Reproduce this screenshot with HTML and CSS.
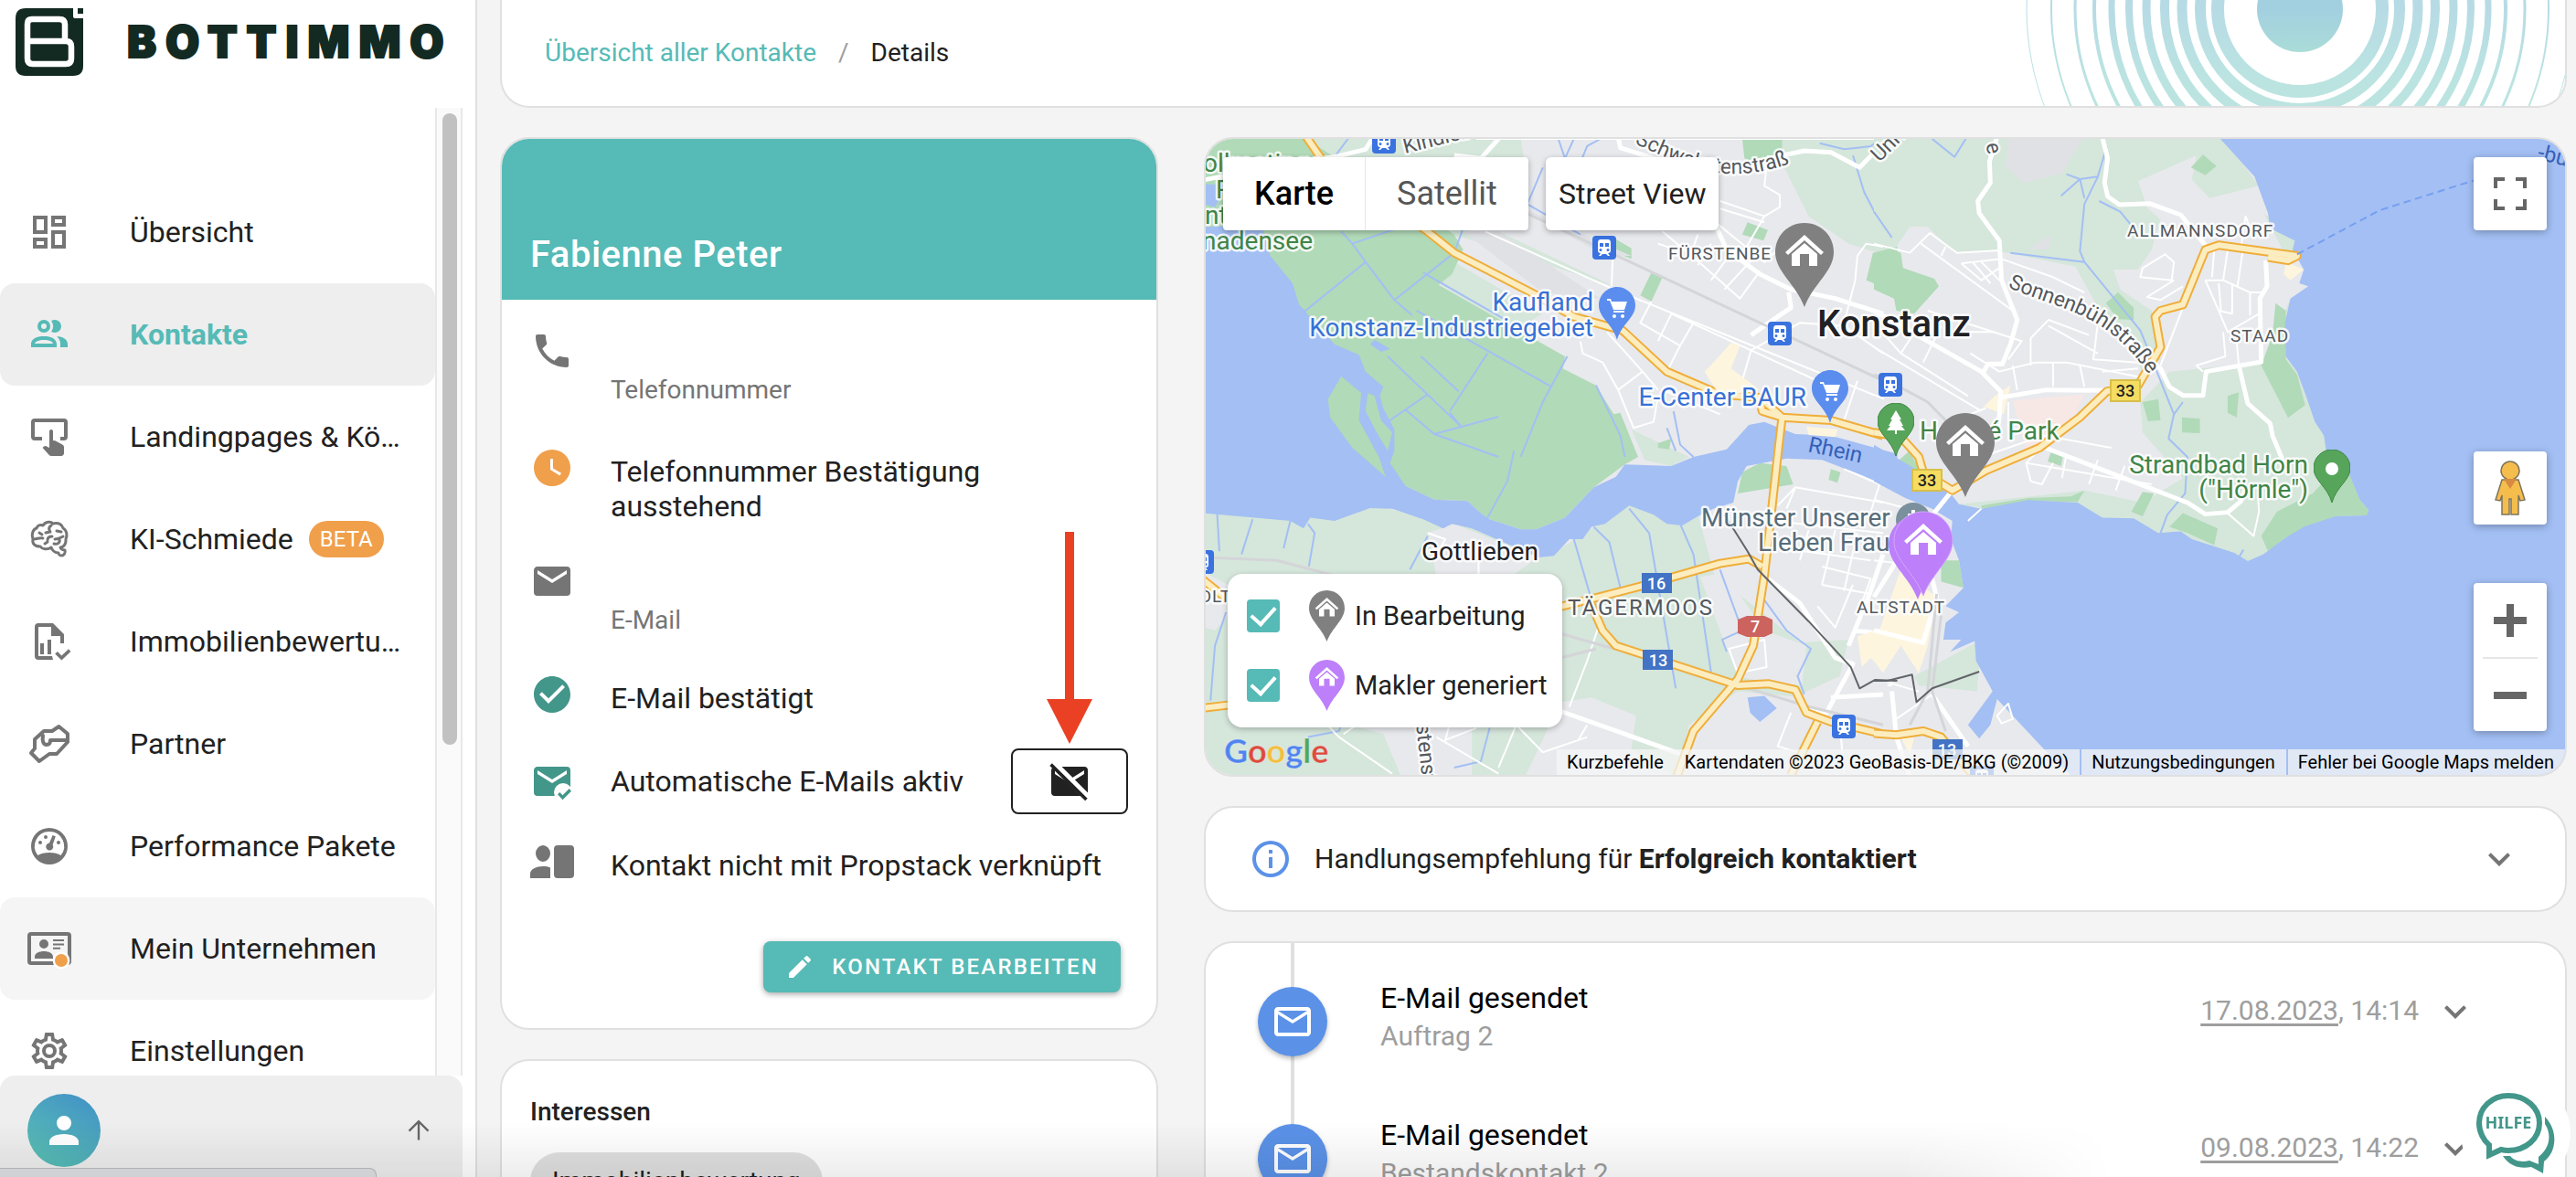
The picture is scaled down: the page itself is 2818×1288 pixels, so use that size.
FILE: index.html
```html
<!DOCTYPE html>
<html lang="de">
<head>
<meta charset="utf-8">
<meta name="viewport" content="width=device-width, initial-scale=1">
<title>Kontakt – Details</title>
<link rel="stylesheet" href="styles.css">
</head>
<body>
<div class="app">

<aside class="sidebar">
  <a class="brand" href="#">
    <svg class="brand-mark" viewBox="0 0 74 74" aria-hidden="true">
      <path fill="#132a22" d="M11 0H63V9Q63 11 65 11H74V63Q74 74 63 74H11Q0 74 0 63V11Q0 0 11 0ZM68 0H74V6H68Z"/>
      <path fill="none" stroke="#fff" stroke-width="6.500" d="M13 36V17Q13 12 18 12H48Q54 12 54 18V36M13 36H55Q61 36 61 42V55Q61 61 55 61H19Q13 61 13 55V36"/>
    </svg>
    <span class="brand-name">BOTTIMMO</span>
  </a>

  <div class="nav-scroll">
    <nav class="nav" aria-label="Hauptmenü">
      <a class="nav-item" href="#"><svg class="icon" viewBox="0 0 24 24"><path d="M19 5v2h-4V5h4M9 5v6H5V5h4m10 8v6h-4v-6h4M9 17v2H5v-2h4M21 3h-8v6h8V3M11 3H3v10h8V3m10 8h-8v10h8V11m-10 4H3v6h8v-6z"/></svg><span class="nav-text">Übersicht</span></a>
      <a class="nav-item is-active" href="#" aria-current="page"><svg class="icon" viewBox="0 0 24 24"><path d="M13.070 10.410a5 5 0 0 0 0-5.820A3.390 3.390 0 0 1 15 4a3.500 3.500 0 0 1 0 7 3.390 3.390 0 0 1-1.930-.590M5.500 7.500A3.500 3.500 0 1 1 9 11 3.500 3.500 0 0 1 5.500 7.500m2 0A1.500 1.500 0 1 0 9 6a1.500 1.500 0 0 0-1.500 1.500M16 17v2H2v-2s0-4 7-4 7 4 7 4m-2 0c-.140-.780-1.330-2-5-2s-4.930 1.310-5 2m11.950-4A5.320 5.320 0 0 1 18 17v2h4v-2s0-3.630-6.060-4z"/></svg><span class="nav-text">Kontakte</span></a>
      <a class="nav-item" href="#"><svg class="icon" viewBox="0 0 24 24"><path d="M4 2h16a2 2 0 0 1 2 2v8a2 2 0 0 1-2 2h-2v-2h2V4H4v8h4v2H4a2 2 0 0 1-2-2V4a2 2 0 0 1 2-2zM13 8a1 1 0 0 1 1 1v5l1.200.100 3.900 2.100c.600.300.900.800.900 1.400V21c0 .800-.700 1.500-1.500 1.500H13c-.400 0-.700-.100-1-.400L8.300 18l.700-.700c.200-.200.500-.300.800-.300H10l2 1V9a1 1 0 0 1 1-1z"/></svg><span class="nav-text">Landingpages &amp; Köder</span></a>
      <a class="nav-item" href="#"><svg class="icon" viewBox="0 0 24 24"><path class="line" d="M8.500 4.500C10 2 13 2.300 14 3.500c3-.800 5 .500 5.500 2.500 2 1 2.500 4 1.500 6 .300 3-1.500 4.500-3 4.500.500 1 1.500 1.500 2.500 1.500.500 1.500-.500 3-2 3-1 0-1.500-1-1.500-1.500-2 0-3.500-1.500-4-3-2 1.500-5 1-6-.500-3 0-4.500-1.500-4-4C2 9.500 3 6.500 5 6c.500-1.500 2-2 3.500-1.500M13 4.500c-1.500 1-1.500 2-.500 3.500L10 8.500M6.500 8.500 8 9.500M3.500 12c2 0 3-1 5-.500M16 7.500l2.500.500M11 12.500c0-1.500 1-2 2.500-2M15 12c2 0 2.500-.500 4.500-1.500M17.500 12c.500 2-1 3-3 2.500M9.500 14.500l1.500-1"/></svg><span class="nav-text">KI-Schmiede</span><span class="badge">BETA</span></a>
      <a class="nav-item" href="#"><svg class="icon" viewBox="0 0 24 24"><path d="M6 2h8l6 6v5h-2V9h-5V4H6v16h7.500l.500 2H6a2 2 0 0 1-2-2V4a2 2 0 0 1 2-2zm1 11h2v6H7zm4-2h2v8h-2zm5.500 6.500 2.200 2.200 3.800-3.600 1.200 1.400-5 4.800-3.600-3.500z"/></svg><span class="nav-text">Immobilienbewertung</span></a>
      <a class="nav-item" href="#"><svg class="icon" viewBox="0 0 24 24"><path class="line bold" d="M17.200 2.500 22 6.500v4.500l-6 6.500H12l-5.500 4L2 17l2-2.500V9.500L9 5h4.500l3.700-2.500zM8.500 7.500c-.500 2.500 0 5 2 5s2-1.500 2-2.500h8.500"/></svg><span class="nav-text">Partner</span></a>
      <a class="nav-item" href="#"><svg class="icon" viewBox="0 0 24 24"><path fill-rule="evenodd" d="M12 2a10 10 0 1 1 0 20 10 10 0 0 1 0-20m0 2a8 8 0 0 0-6.300 13c1.500-1 3.700-1.500 6.300-1.500s4.800.500 6.300 1.500A8 8 0 0 0 12 4m1.800 2 1.600.600-1.600 4.600a2 2 0 1 1-1.800-.900zM10 6a1 1 0 1 1 0 2 1 1 0 0 1 0-2M7 9a1 1 0 1 1 0 2 1 1 0 0 1 0-2m10 0a1 1 0 1 1 0 2 1 1 0 0 1 0-2"/></svg><span class="nav-text">Performance Pakete</span></a>
      <a class="nav-item is-hover" href="#"><svg class="icon" viewBox="0 0 24 24"><path d="M2 3h20a2 2 0 0 1 2 2v14a2 2 0 0 1-2 2H2a2 2 0 0 1-2-2V5a2 2 0 0 1 2-2m0 2v14h20V5zm12 2h6v1h-6zm0 2.200h6v1h-6zm0 2.200h4v1h-4zM9 7a2.500 2.500 0 1 1 0 5 2.500 2.500 0 0 1 0-5m0 6.500c2.500 0 5 1 5 3V17.500H4v-1c0-2 2.500-3 5-3z"/><circle cx="18.500" cy="18.500" r="4.700" fill="#fff"/><circle cx="18.500" cy="18.500" r="3.500" fill="#f09f4b"/></svg><span class="nav-text">Mein Unternehmen</span></a>
      <a class="nav-item" href="#"><svg class="icon" viewBox="0 0 24 24"><path d="M12 8a4 4 0 1 1 0 8 4 4 0 0 1 0-8m0 2a2 2 0 1 0 0 4 2 2 0 0 0 0-4m-2 12c-.250 0-.460-.180-.500-.420l-.370-2.650c-.630-.250-1.170-.590-1.690-.990l-2.490 1.010c-.220.080-.490 0-.610-.220l-2-3.460c-.130-.220-.070-.490.120-.640l2.110-1.660L4.500 12l.070-1-2.110-1.630c-.190-.150-.250-.420-.120-.640l2-3.460c.120-.220.390-.310.610-.220l2.490 1c.520-.390 1.060-.730 1.690-.980l.370-2.650c.040-.240.250-.420.500-.420h4c.250 0 .460.180.500.420l.370 2.650c.630.250 1.170.590 1.690.980l2.490-1c.220-.090.490 0 .610.220l2 3.460c.130.220.070.490-.120.640L19.430 11l.070 1-.070 1 2.110 1.630c.190.150.250.420.120.640l-2 3.460c-.120.220-.390.310-.610.220l-2.490-1c-.520.390-1.060.730-1.690.980l-.370 2.650c-.040.240-.250.420-.500.420h-4m1.250-18-.370 2.610c-1.200.250-2.260.890-3.030 1.780L5.440 7.350l-.750 1.300L6.800 10.200c-.400 1.170-.400 2.430 0 3.600l-2.120 1.560.750 1.300 2.430-1.040c.770.880 1.820 1.520 3.010 1.760l.370 2.620h1.520l.370-2.610c1.190-.250 2.240-.890 3.010-1.770l2.430 1.040.750-1.300-2.120-1.550c.400-1.170.400-2.440 0-3.610l2.110-1.550-.750-1.300-2.410 1.040c-.780-.890-1.840-1.530-3.040-1.770L12.750 4h-1.500z"/></svg><span class="nav-text">Einstellungen</span></a>
    </nav>
    <div class="scrollbar" aria-hidden="true"><div class="thumb"></div></div>
  </div>

  <div class="account">
    <button class="avatar" type="button" aria-label="Profil"><svg class="icon" viewBox="0 0 24 24"><path d="M12 4a4 4 0 0 1 4 4 4 4 0 0 1-4 4 4 4 0 0 1-4-4 4 4 0 0 1 4-4m0 10c4.420 0 8 1.790 8 4v2H4v-2c0-2.210 3.580-4 8-4z"/></svg></button>
    <button class="plain" type="button" aria-label="Profilmenü öffnen"><svg class="icon-up" viewBox="0 0 24 24"><path d="M12 21V4M3 12.500 12 3.500l9 9"/></svg></button>
  </div>
  <div class="status" aria-hidden="true"></div>
</aside>

<main class="main">
  <header class="card topbar">
    <nav class="crumbs" aria-label="Brotkrumen"><a href="#">Übersicht aller Kontakte</a><span class="slash">/</span><span>Details</span></nav>
    <svg class="rings" viewBox="0 0 592 116" aria-hidden="true">
      <defs><linearGradient id="ring" gradientUnits="userSpaceOnUse" x1="0" y1="10" x2="0" y2="90"><stop offset="0" stop-color="#b7dbe5"/><stop offset="1" stop-color="#bbe4e1"/></linearGradient>
      <linearGradient id="disc" x1="0" y1="0.500" x2="0" y2="1"><stop offset="0" stop-color="#a3d0e0"/><stop offset="1" stop-color="#aadcd8"/></linearGradient></defs>
      <circle cx="302" cy="10" r="47" fill="url(#disc)"/>
      <g fill="none" stroke="url(#ring)">
        <circle cx="302" cy="10" r="90" stroke-width="14"/><circle cx="302" cy="10" r="109" stroke-width="12"/><circle cx="302" cy="10" r="129" stroke-width="11"/><circle cx="302" cy="10" r="148" stroke-width="10"/><circle cx="302" cy="10" r="168" stroke-width="9"/><circle cx="302" cy="10" r="187" stroke-width="8"/><circle cx="302" cy="10" r="206" stroke-width="7"/><circle cx="302" cy="10" r="225" stroke-width="4"/><circle cx="302" cy="10" r="246" stroke-width="3"/><circle cx="302" cy="10" r="272" stroke-width="2"/><circle cx="302" cy="10" r="299" stroke-width="1"/>
      </g>
    </svg>
  </header>

  <div class="columns">
    <div class="column">
      <section class="card contact">
        <h1 class="contact-name">Fabienne Peter</h1>
        <ul class="facts">
          <li class="fact tall"><svg class="icon" viewBox="0 0 24 24"><path d="M6.620 10.790c1.440 2.830 3.760 5.140 6.590 6.590l2.200-2.200c.270-.270.670-.360 1.020-.240 1.120.370 2.330.570 3.570.570.550 0 1 .450 1 1V20c0 .550-.450 1-1 1C10.610 21 3 13.390 3 4c0-.550.450-1 1-1h3.500c.550 0 1 .450 1 1 0 1.250.200 2.450.570 3.570.110.350.030.740-.250 1.020l-2.200 2.200z"/></svg><span class="hint">Telefonnummer</span></li>
          <li class="fact wide"><svg class="icon orange" viewBox="0 0 24 24"><path d="M12 2A10 10 0 0 0 2 12a10 10 0 0 0 10 10 10 10 0 0 0 10-10A10 10 0 0 0 12 2m4.200 14.200L11 13V7h1.500v5.200l4.500 2.700-.800 1.300z"/></svg><span class="value">Telefonnummer Bestätigung ausstehend</span></li>
          <li class="fact wide"><svg class="icon" viewBox="0 0 24 24"><path d="M20 8l-8 5-8-5V6l8 5 8-5m0-2H4c-1.110 0-2 .890-2 2v12a2 2 0 0 0 2 2h16a2 2 0 0 0 2-2V6a2 2 0 0 0-2-2z"/></svg><span class="hint">E-Mail</span></li>
          <li class="fact short"><svg class="icon green" viewBox="0 0 24 24"><path d="M12 2C6.500 2 2 6.500 2 12s4.500 10 10 10 10-4.500 10-10S17.500 2 12 2m-2 15-5-5 1.410-1.410L10 14.170l7.590-7.590L19 8l-9 9z"/></svg><span class="value">E-Mail bestätigt</span></li>
          <li class="fact action"><svg class="icon green" viewBox="0 0 24 24"><path d="M20 8l-8 5-8-5V6l8 5 8-5m0-2H4c-1.110 0-2 .890-2 2v12a2 2 0 0 0 2 2h16a2 2 0 0 0 2-2V6a2 2 0 0 0-2-2z"/><circle cx="18" cy="18" r="5" fill="#fff"/><path d="M17.750 22.160l-2.750-3 1.160-1.160 1.590 1.590 3.590-3.590 1.160 1.410-4.750 4.750"/></svg><span class="value">Automatische E-Mails aktiv</span>
            <button class="outline-button" type="button" aria-label="Automatische E-Mails deaktivieren"><svg class="icon" viewBox="0 0 24 24"><path d="M20 8l-8 5-8-5V6l8 5 8-5m0-2H4c-1.110 0-2 .890-2 2v12a2 2 0 0 0 2 2h16a2 2 0 0 0 2-2V6a2 2 0 0 0-2-2z"/><path d="M2.500 1.500 22.500 21.500" stroke="#fff" stroke-width="4"/><path d="M1.800 2.800 21.200 22" stroke="#212121" stroke-width="1.800"/></svg></button>
            <svg class="pointer" viewBox="0 0 50 232" aria-hidden="true"><path fill="#ea4124" d="M20 0H30V183H50L25 232 0 183H20Z"/></svg>
          </li>
          <li class="fact"><svg class="icon" viewBox="0 0 24 24"><path d="M7 3a4 4.500 0 1 1 0 9 4 4.500 0 0 1 0-9m4 18H0v-2.500c0-2.500 3.500-4 7-4 1.500 0 2.900.200 4 .700zM15 3h7a2 2 0 0 1 2 2v14a2 2 0 0 1-2 2h-7a2 2 0 0 1-2-2V5a2 2 0 0 1 2-2z"/></svg><span class="value">Kontakt nicht mit Propstack verknüpft</span></li>
        </ul>
        <div class="contact-actions"><button class="primary-button" type="button"><svg viewBox="0 0 24 24"><path d="M20.710 7.040c.390-.390.390-1.040 0-1.410l-2.340-2.340c-.370-.390-1.020-.390-1.410 0l-1.840 1.830 3.750 3.750M3 17.250V21h3.750L17.810 9.930l-3.750-3.750L3 17.250z"/></svg>Kontakt bearbeiten</button></div>
      </section>
      <section class="card interests">
        <h2>Interessen</h2>
        <span class="chip">Immobilienbewertung</span>
      </section>
    </div>

    <div class="column">
      <section class="card map" aria-label="Karte">
        <svg class="map-canvas" viewBox="1319 152 1487 696" preserveAspectRatio="xMidYMid slice">
          <defs>
            <symbol id="pin" viewBox="0 0 64 92" overflow="visible"><path d="M32 0C50 0 64 14 64 32 64 53 42 66 32 92 22 66 0 53 0 32 0 14 14 0 32 0Z"/><path fill="#fff" stroke="none" d="M32 13 11 32l3 3 18-16 18 16 3-3zM32 22 18 34v13h9V34h10v13h9V34z"/></symbol>
            <symbol id="spot" viewBox="0 0 40 58"><path d="M20 0C31 0 40 9 40 20 40 34 25 40 20 58 15 40 0 34 0 20 0 9 9 0 20 0Z"/></symbol>
            <symbol id="cart" viewBox="0 0 24 24"><path d="M1 2h4l1 3h17l-3 9H8L4 4H1zM8 15h12v2H8z"/><circle cx="9" cy="21" r="2"/><circle cx="18" cy="21" r="2"/></symbol>
            <symbol id="train" viewBox="0 0 26 26"><rect width="26" height="26" rx="4" fill="#3a73e0"/><path fill="#fff" fill-rule="evenodd" d="M9 4h8q3 0 3 4v8q0 3-3 3l2 3h-2l-2-2h-4l-2 2H7l2-3q-3 0-3-3V8q0-4 3-4zM8 8v4h4V8zm6 0v4h4V8zM9 14a1 1 0 1 0 0 3 1 1 0 0 0 0-3m8 0a1 1 0 1 0 0 3 1 1 0 0 0 0-3"/></symbol>
          </defs>
          <rect x="1300" y="140" width="1520" height="720" fill="#e8e9ed"/>

          <!-- western half -->
          <g class="terrain" transform="translate(1300 140) scale(.4847 .3333)">
            <path class="meadow" d="M260 30H750L760 130 700 280 610 360 400 180ZM1310 30 1400 290 1490 380 1600 430V30ZM570 515 600 440 800 610 740 660ZM600 350 700 340 960 520ZM0 1250 420 1240 640 1310 820 1400 1000 1230 1150 1270 1190 1480 1250 1540 1380 1690 1490 1680 1470 1800 1380 1860 1420 2140H0ZM1030 1090 1090 1110 1130 1080 1000 990Z"/>
            <path class="urban" d="M1155 1475 1210 1460 1300 1650 1395 1700 1385 1830 1300 1820 1240 1800 1210 1690ZM840 1885 910 1870 1010 1930 1000 2040 1100 2130H760ZM340 1950H640L640 2130H480L440 1990ZM1130 1960 1240 1850 1600 1900V2140H1100ZM540 1330 600 1300 790 1410 730 1470H560ZM37 1460 90 1500V1600L60 1650 37 1640Z"/>
            <path class="park" d="M37 30H260L345 110 600 350 620 400 595 480 565 515 740 660 850 750 845 790 920 845 960 940 975 935 1015 1080 985 1105 915 1180 850 1280 785 1318 750 1318 680 1285 660 1265 630 1225 555 1220 490 1175 300 1060 37 900ZM1045 475 1070 490 1045 570 1020 550ZM1262 310 1308 335 1298 370 1250 350ZM965 365 1000 395V430L965 410ZM1190 36H1340L1340 100 1290 120 1255 100 1250 36ZM1545 410 1600 390V540L1530 500ZM1250 1130 1290 1100 1350 1110 1365 1170 1240 1200ZM1450 1120 1472 1130 1465 1165 1445 1155ZM1060 1035 1090 1020 1085 1055 1060 1050Z"/>
            <path class="runway" d="M620 340 700 340 930 560 800 540ZM720 240 1000 420 940 420Z"/>
            <path class="water" d="M37 325 165 320 185 420 235 510 250 580 330 710 385 745 400 800 440 850 432 880 440 920 465 990 465 1060 455 1100 490 1175 555 1220 630 1225 660 1265 680 1285 750 1318 785 1318 850 1280 915 1180 965 1145 985 1105 1090 1110 1140 1080 1215 1055 1265 975 1300 965 1370 1005 1450 1010 1600 1070 1600 1190 1520 1140 1430 1090 1350 1085 1260 1110 1240 1160 1230 1230 1185 1250 1150 1275 1115 1305 1080 1300 1050 1270 995 1240 940 1300 910 1310 890 1350 860 1350 825 1405 790 1410 640 1315 595 1300 575 1315 530 1285 460 1250 410 1248 330 1290 275 1280 260 1315 230 1290 37 1265ZM37 185 90 185 60 260 37 250ZM1262 1870 1300 1865 1328 1905 1290 1950 1268 1920ZM410 710 420 695 455 725 435 735Z"/>
            <path class="park" d="M345 815 315 890 320 950 370 1050 445 1145 430 1080 385 960 390 870ZM405 870 420 880 435 960 460 1000 450 1060 425 1000 400 930Z"/>
            <path class="stream" d="M345 340 370 380 400 440 260 605 M470 330 370 380 M400 440 465 565 505 615 M620 330 600 410 465 565 M530 475 710 625 M515 600 820 850 M855 750 800 900 750 1080 M675 740 590 930 M450 750 615 980 M525 750 610 865 M540 875 455 960 M490 925 555 1005 700 948 M555 1005 700 1080 M615 980 590 935 M920 845 975 1010 985 1080 M1095 930 1110 1040 1140 1080 M1080 985 1100 1060 M835 36 850 100 870 36 M880 130 900 60 930 36 M800 130 765 250 885 350 M360 36 330 95 M1425 50 1480 70 1540 60 1568 30 M1500 90 1525 210 1568 330 M65 1265 70 1390 M145 1285 120 1400 M230 1290 215 1380 M270 1300 285 1330 272 1440 M540 1340 500 1450 M870 1350 910 1550 M915 1310 950 1360 975 1510 M995 1250 1040 1330 1100 1840 M1110 1300 1140 1400 1180 1790 M1200 1450 1250 1650 1205 1680 1215 1720 M1290 1530 1350 1650 1405 1710 1375 1800 1390 1860 M85 1590 60 1700 50 1880 M735 1060 720 1160 675 1280 M270 2000 340 1980 345 1960 M680 1970 660 2080 600 2100"/>
            <path class="street" d="M670 340 960 530 1570 890 M960 360 955 520 M650 36 1568 36 M885 700 890 740 935 770 970 860 1005 985 1050 965 1060 880 M945 670 1025 800 970 860 M1025 800 1060 860 M1045 570 1020 640 1110 715 1140 640 M1090 610 1060 700 M1110 715 1080 800 M1090 610 1270 730 1480 870 M1270 730 1250 830 1290 880 M1270 730 1380 640 1480 650 1568 740 M1200 265 1300 310 M1200 240 1300 290 1335 260 1335 220 1300 190 1308 90 M1300 290 1240 440 M1190 310 1300 440 1330 400 M1070 340 1160 450 1245 560 1290 470 M1100 400 1060 380 M1150 350 1130 430 M1180 380 1150 450 M1230 400 1180 500 M1280 420 1210 530 M1480 640 1505 500 1510 420 1530 380 1568 390 M1480 960 1510 830 M1200 940 1070 860 M1330 1240 1370 1180 1568 1230 M1480 1120 1560 1170 1540 1260 M1370 1180 1350 1250 M1320 1290 1568 1330 M1340 1380 1540 1420 M1400 1320 1380 1420 M1460 1320 1430 1500 M1510 1330 1480 1520 M1430 1440 1540 1480 1520 1560 1568 1600 M1430 1500 1540 1530 M1420 1570 1460 1640 1500 1500 M925 1640 900 1750 860 1900 M240 1850 340 2000 460 2120 M350 1990 440 1900 M560 2000 700 2120 M600 1900 580 2010 650 1970 M700 1900 800 2050 900 2000 M740 1960 700 2100 M900 1960 880 2010 M1220 1710 1300 1680 1305 1770 1240 1790Z M1360 1920 1330 2030 1400 2060 M1470 1950 1480 2120 M655 1420V1480 M540 1330 580 1350 560 1400"/>
            <path class="road" d="M37 170 180 130 340 92 400 70 415 36 M600 90 660 100 700 36 M970 30 975 65 1070 110 1190 150 1310 100 1390 75 1450 80 1515 130 1568 50 M1190 320 1215 400 1290 480 1360 530 1460 560 1568 610 M1355 540 1360 590 1270 680 M840 1915 1120 2060 M1370 1850 1400 1910 1440 1920 1500 1760 1460 1740 1380 1560 1290 1460 M1568 1400 1540 1520 1490 1700 M1500 1650 1568 1660 M1450 1870 1568 1860"/>
            <path class="rail" d="M600 160 770 285 1568 830 M40 1410 200 1420 330 1470 M840 1660 960 1710 M840 1740 920 1710 M1240 1830 1400 1900 1568 1960"/>
            <path class="main-edge" d="M262 20 290 80 310 120 400 200 540 340 600 410 780 545 870 620 980 665 1080 800 1200 875 1290 885 1340 950 1450 960 1568 1010 M1290 890 1295 930 1340 950 1332 1050 1300 1470 1275 1700 1240 1810 1140 1980 1100 2140 M840 1572 900 1550 1020 1505 1200 1430 1265 1415 1295 1440 M905 1550 935 1650 965 1700 1060 1745 1240 1830 1310 1825 1370 1845 1395 1920 1450 1950 1568 1990 M1420 1950 1360 2125 M30 1905 90 1895 M30 1480 90 1550"/>
            <path class="main-fill" d="M262 20 290 80 310 120 400 200 540 340 600 410 780 545 870 620 980 665 1080 800 1200 875 1290 885 1340 950 1450 960 1568 1010 M1290 890 1295 930 1340 950 1332 1050 1300 1470 1275 1700 1240 1810 1140 1980 1100 2140 M840 1572 900 1550 1020 1505 1200 1430 1265 1415 1295 1440 M905 1550 935 1650 965 1700 1060 1745 1240 1830 1310 1825 1370 1845 1395 1920 1450 1950 1568 1990 M1420 1950 1360 2125 M30 1905 90 1895 M30 1480 90 1550"/>
            <path class="sand" d="M1225 705 1245 715 1225 790 1290 860 1200 880 1165 800 1185 770ZM1510 1670 1568 1640V1780L1540 1740 1520 1770ZM1395 980 1465 990 1460 1015 1400 1008Z"/>
            <path class="border" d="M1210 1270 1262 1390 1285 1450 1400 1620 1495 1770 1515 1840 1550 1812 1600 1815"/>
          </g>

          <!-- eastern half -->
          <g class="terrain" transform="translate(2050 140) scale(.4898 .3333)">
            <path class="meadow" d="M0 30H510L520 220 600 250 640 300 620 400 590 465 535 465 550 530 620 600 640 760 600 800 560 690 500 590 450 455 280 405 180 410 120 325 80 325 50 390 0 380ZM510 30H780L860 190 750 230 710 170 720 90 590 175 610 260 520 220ZM660 800 870 770 930 560 960 860 1110 1250 840 1430 640 1340 500 1280 440 1230 250 1250 190 1235 470 1190 600 1230 690 1150 600 1000 595 900ZM870 280 960 380 920 420ZM90 1800 240 1680 230 1850 100 1830Z"/>
            <path class="runway" d="M300 36H465L420 150 335 180 295 130ZM345 400 395 350 390 400Z"/>
            <path class="clinic" d="M310 895 470 875 440 970 340 1060Z"/>
            <path class="park" d="M0 440 35 395 60 410 65 460 135 495 145 520 90 610 50 600 45 560 0 530ZM735 88 765 125 740 155 708 130ZM545 540 580 590V630L545 628 518 575ZM897 575 920 600 920 760 945 810 963 910 925 952 865 780 890 680ZM600 900 635 890 640 960 612 962ZM790 880 815 868 810 950 790 935ZM688 950 728 955V1002L688 1000ZM395 1065 422 1080 418 1110 388 1095ZM600 1195 625 1200 600 1275 575 1260ZM1050 1090 1085 1220 1105 1255 1100 1272 1030 1275 920 1345 880 1390 865 1340 900 1260 980 1200ZM690 1265 768 1315 760 1370 700 1330 660 1310ZM240 1240 345 1215 440 1210 470 1190 455 1228 345 1225 240 1250ZM150 1420 190 1420 200 1510 150 1490ZM40 1110 80 1060 100 1120 70 1150Z"/>
            <path class="sand" d="M920 440 960 465 930 500 915 480ZM0 1700 60 1450 140 1540 120 1700 100 1790 60 1700 20 1790 0 1750ZM270 880 305 845 290 940 245 915ZM60 2000 90 2000 80 2060Z"/>
            <path class="water" d="M770 30 850 160 880 280 885 330 940 370 935 400 960 465 950 510 970 520 930 560 918 640 920 750 945 800 965 880 985 965 1005 1010 1010 1060 1060 1130 1085 1220 1105 1255 1100 1272 1030 1275 960 1310 920 1345 870 1400 835 1422 805 1395 710 1350 685 1325 635 1330 580 1282 510 1280 455 1230 345 1222 240 1250 190 1235 160 1180 70 1100 0 1040V1160L70 1215 130 1250 175 1290 172 1350 190 1420 200 1510 160 1570 190 1590 160 1625 155 1680 195 1680 170 1720 225 1685 228 1750 265 1850 210 1960 235 2005 260 1960 275 1875 380 2040 450 2140H1600V30Z"/>
            <path class="stream" d="M0 275 40 360 M130 36 180 95 205 36 M305 410 470 440 595 665 670 940 658 1020 700 1080 695 1200 655 1270 640 1330 M520 60 500 160 470 250 460 405 470 440 M430 152 460 168 500 160 M460 168 418 223 M460 168 470 230 M503 240 550 275 575 320 M690 900 670 940 M825 1385 815 1410"/>
            <path class="street" d="M0 380 80 410 125 345 185 410 280 402 M105 380 310 600 M160 390 150 420 M195 445 285 430 400 490 470 540 M195 445 240 500 280 460 M220 440 260 510 M240 440 280 500 M120 600 330 700 300 760 M0 640 60 740 210 880 M0 720 240 930 M100 650 60 740 M150 650 110 770 M215 670 270 670 M215 740 280 800 360 770 430 770 600 820 M350 690V780 M350 690 390 630 480 680 M390 650 500 740 M500 640 490 760 590 770 M510 800 590 790 M400 770V850 M460 780 470 850 M310 780 320 860 M595 490 600 460 650 415 670 440 665 500ZM670 500 610 555 640 565 690 520 M760 400 755 490 M790 400 780 500 M825 390 812 520 M740 500 780 500 840 540 870 540 M740 500 770 600 800 610 800 510 M770 510 775 600 M840 540V615 M770 600 790 670 860 610 M780 670 785 750 720 780 735 800 M810 700 815 780 M690 590 640 780 M820 390 830 290 838 320 M240 1080 380 1010 530 1050 M300 900V1000 M250 920 180 960 M380 1040 340 1100 350 1160 375 1170 400 1100 M430 1070 420 1150 M500 1090 480 1170 M560 1110 540 1190 M340 1100 620 1170 M790 1265 848 1340 860 1260 858 1215 M0 1220 100 1260 60 1400 M0 1420 60 1430 M30 1830 40 1830 M50 1940 130 1860 M30 1820 100 1850 M275 1930 300 1890 310 1940 285 1955ZM210 1290 240 1250"/>
            <path class="road" d="M275 30 258 110 260 180 232 240 235 280 280 370 285 500 320 630 305 710 287 775 255 775 245 800 M510 30 522 100 515 180 522 225 548 252 615 248 685 285 740 385 M0 600 120 700 240 800 283 865 280 950 275 1000 M283 885 385 860 520 862 M560 690 640 790 660 850 690 878 735 878 742 800 865 768 862 560 878 520 875 435 M815 780 835 905 885 970 890 1010 910 1080 918 1130 M375 1045 400 1060 700 1230 740 1268 790 1262 820 1225 830 1180 M175 1190 60 1400 0 1540 M0 1650 110 1690 140 1540 130 1480 M40 1850 50 2000 80 2130 M130 1860 210 2030"/>
            <path class="rail" d="M0 810 70 860 120 900 180 990 M140 1530 120 1850 80 1960 M150 1600 130 1850 160 1980"/>
            <path class="main-edge" d="M0 1000 60 1015 100 1080 110 1130 175 1190 250 1125 370 1050 460 950 520 865 590 845 640 720 628 620 640 600 690 580 740 400 770 385 870 405 945 420 925 435 880 425 M0 1988 50 1993 110 1980 150 2000 230 2140"/>
            <path class="main-fill" d="M0 1000 60 1015 100 1080 110 1130 175 1190 250 1125 370 1050 460 950 520 865 590 845 640 720 628 620 640 600 690 580 740 400 770 385 870 405 945 420 925 435 880 425 M0 1988 50 1993 110 1980 150 2000 230 2140"/>
            <path class="border" d="M0 1815 30 1815 85 1795 95 1885 130 1840 235 1785"/>
            <path class="ferry" d="M945 415 1130 270 1345 170 1480 100"/>
          </g>

          <use href="#train" x="1501" y="142" width="26" height="26"/><use href="#train" x="1742" y="258" width="26" height="26"/><use href="#train" x="1934" y="352" width="26" height="26"/><use href="#train" x="2055" y="408" width="26" height="26"/><use href="#train" x="1302" y="602" width="26" height="26"/><use href="#train" x="2004" y="782" width="26" height="26"/><use href="#train" x="2155" y="838" width="26" height="26"/>

          <g class="shield">
            <g fill="#f5dd62" stroke="#d8bf4a" stroke-width="2"><path d="M2309 416h32v23h-32zM2092 514h32v23h-32z"/></g>
            <path fill="#4273c4" d="M1796 627h33v22h-33zM1797 711h33v22h-33zM2114 809h33v22h-33z"/>
            <path fill="#cc635f" d="M1901 678 1911 674H1930L1939 678V693L1930 697H1911L1901 693Z"/>
            <text x="2325" y="434">33</text><text x="2108" y="532">33</text>
            <g fill="#fff"><text x="1812" y="645">16</text><text x="1814" y="729">13</text><text x="1920" y="692">7</text><text x="2130" y="827">13</text></g>
          </g>

          <g class="place green-text">
            <text x="1316" y="188">ollmatinger</text><text x="1330" y="217">Ried</text><text x="1318" y="245">ntersee-</text><text x="1436" y="273" text-anchor="end">nadensee</text>
            <text x="2100" y="481">Herosé Park</text>
            <text x="2525" y="518" text-anchor="end">Strandbad Horn</text><text x="2525" y="545" text-anchor="end">("Hörnle")</text>
          </g>
          <g class="place blue-text" text-anchor="end"><text x="1743" y="340">Kaufland</text><text x="1743" y="368">Konstanz-Industriegebiet</text><text x="1976" y="444">E-Center BAUR</text></g>
          <g class="place slate-text"><text x="1861" y="576">Münster Unserer</text><text x="1923" y="603">Lieben Frau</text></g>
          <text class="place dark-text" x="1555" y="613">Gottlieben</text>
          <text class="city" x="1988" y="368">Konstanz</text>
          <g class="district"><text x="1825" y="284">FÜRSTENBE</text><text x="2327" y="259">ALLMANNSDORF</text><text x="2440" y="374">STAAD</text><text x="2031" y="671">ALTSTADT</text><text x="1312" y="659">OLT</text></g>
          <text class="district large" x="1715" y="673">TÄGERMOOS</text>
          <path id="way-a" fill="none" d="M1788 157C1840 180 1885 206 1960 178"/><path id="way-b" fill="none" d="M2196 314C2260 342 2300 340 2348 406"/>
          <g class="street-text">
            <text transform="translate(1537 168) rotate(-14)">Kindlebild</text>
            <text><textPath href="#way-a">Schwaketenstraße</textPath></text>
            <text><textPath href="#way-b">Sonnenbühlstraße</textPath></text>
            <text transform="translate(2056 178) rotate(-45)">Univ</text>
            <text transform="translate(2172 158) rotate(75)">e</text>
            <text transform="translate(1548 780) rotate(84)">nstenstr</text>
          </g>
          <g class="water-text"><text transform="translate(1977 494) rotate(12)">Rhein</text><text transform="translate(2775 174) rotate(14)">-bu</text></g>

          <g fill="#5b8def"><use href="#spot" x="1749" y="314" width="40" height="58"/><use href="#spot" x="1982" y="405" width="40" height="58"/></g>
          <g fill="#fff"><use href="#cart" x="1757" y="325" width="24" height="24"/><use href="#cart" x="1990" y="416" width="24" height="24"/></g>
          <g fill="#57a55a" stroke="#3d8842"><use href="#spot" x="2054" y="441" width="40" height="58"/><use href="#spot" x="2531" y="492" width="40" height="58"/></g>
          <path fill="#fff" d="M2074 449 2080 459H2078L2082 466H2080L2084 471H2075V475H2073V471H2064L2068 466H2066L2070 459H2068ZM2551 506a7 7 0 1 1 0 14 7 7 0 0 1 0-14"/>
          <circle cx="2093" cy="569" r="19" fill="#7b909d"/><path fill="#fff" d="M2091 558h4v4h4v3h-4v8h-4v-8h-4v-3h4z"/>
          <g fill="#808080"><use href="#pin" x="1942" y="244" width="64" height="92"/><use href="#pin" x="2118" y="452" width="64" height="92"/></g>
          <g fill="#bd7ffa"><use href="#pin" x="2066" y="564" width="64" height="92"/><use href="#pin" x="2072" y="560" width="64" height="92" stroke="#d3a8fb" stroke-width="1"/></g>
        </svg>

        <div class="map-type">
          <div class="segmented"><button class="is-on" type="button">Karte</button><button type="button">Satellit</button></div>
          <button class="street-view" type="button">Street View</button>
        </div>
        <button class="tool fullscreen" type="button" aria-label="Vollbild"><svg viewBox="0 0 36 36"><path d="M2 12V2H12M24 2H34V12M34 24V34H24M12 34H2V24"/></svg></button>
        <div class="tool-stack">
          <button class="tool" type="button" aria-label="Pegman"><svg class="pegman" viewBox="0 0 34 60"><path fill="#f5bd4b" stroke="#7d7460" stroke-width="1.500" d="M8 21H26L33 43 28 44 26 38V59H18V42H16V59H8V38L6 44 1 43Z"/><circle cx="17" cy="11" r="10" fill="#f5bd4b" stroke="#7d7460" stroke-width="1.500"/><path fill="#d68a42" d="M10 20H24L17 31Z"/></svg></button>
          <div class="zoom"><button type="button" aria-label="Vergrößern"><svg viewBox="0 0 36 36"><path d="M14 0H22V14H36V22H22V36H14V22H0V14H14Z"/></svg></button><button type="button" aria-label="Verkleinern"><svg viewBox="0 0 36 36"><path d="M0 14H36V22H0Z"/></svg></button></div>
        </div>
        <div class="legend">
          <label><input type="checkbox" checked><svg fill="#808080" viewBox="0 0 64 92"><use href="#pin" width="64" height="92"/></svg>In Bearbeitung</label>
          <label><input type="checkbox" checked><svg fill="#bd7ffa" viewBox="0 0 64 92"><use href="#pin" width="64" height="92"/></svg>Makler generiert</label>
        </div>
        <a class="google" href="#" aria-label="Google"><span class="g-blue">G</span><span class="g-red">o</span><span class="g-yellow">o</span><span class="g-blue">g</span><span class="g-green">l</span><span class="g-red">e</span></a>
        <div class="credits"><button type="button">Kurzbefehle</button><span>Kartendaten ©2023 GeoBasis-DE/BKG (©2009)</span><a href="#">Nutzungsbedingungen</a><a href="#">Fehler bei Google Maps melden</a></div>
      </section>

      <section class="card advice">
        <svg class="icon" viewBox="0 0 24 24"><path d="M11 9h2V7h-2m1 13c-4.410 0-8-3.590-8-8s3.590-8 8-8 8 3.590 8 8-3.590 8-8 8m0-18A10 10 0 0 0 2 12a10 10 0 0 0 10 10 10 10 0 0 0 10-10A10 10 0 0 0 12 2m-1 15h2v-6h-2v6z"/></svg>
        <p>Handlungsempfehlung für <strong>Erfolgreich kontaktiert</strong></p>
        <button class="plain" type="button" aria-label="Aufklappen"><svg class="icon" viewBox="0 0 24 24"><path d="M7.410 8.580 12 13.170l4.590-4.590L18 10l-6 6-6-6 1.410-1.420z"/></svg></button>
      </section>

      <section class="card timeline">
        <article class="event">
          <div class="event-dot"><svg viewBox="0 0 24 24"><path d="M22 6c0-1.100-.900-2-2-2H4c-1.100 0-2 .900-2 2v12c0 1.100.900 2 2 2h16c1.100 0 2-.900 2-2V6m-2 0-8 5-8-5h16m0 12H4V8l8 5 8-5v10z"/></svg></div>
          <div class="event-text"><h3>E-Mail gesendet</h3><p>Auftrag 2</p></div>
          <time><u>17.08.2023</u>, 14:14</time>
          <button class="plain" type="button" aria-label="Aufklappen"><svg class="icon" viewBox="0 0 24 24"><path d="M7.410 8.580 12 13.170l4.590-4.590L18 10l-6 6-6-6 1.410-1.420z"/></svg></button>
        </article>
        <article class="event">
          <div class="event-dot"><svg viewBox="0 0 24 24"><path d="M22 6c0-1.100-.900-2-2-2H4c-1.100 0-2 .900-2 2v12c0 1.100.900 2 2 2h16c1.100 0 2-.900 2-2V6m-2 0-8 5-8-5h16m0 12H4V8l8 5 8-5v10z"/></svg></div>
          <div class="event-text"><h3>E-Mail gesendet</h3><p>Bestandskontakt 2</p></div>
          <time><u>09.08.2023</u>, 14:22</time>
          <button class="plain" type="button" aria-label="Aufklappen"><svg class="icon" viewBox="0 0 24 24"><path d="M7.410 8.580 12 13.170l4.590-4.590L18 10l-6 6-6-6 1.410-1.420z"/></svg></button>
        </article>
      </section>
    </div>
  </div>
</main>
</div>

<div class="bottom-shade" aria-hidden="true"></div>
<button class="help" type="button" aria-label="Hilfe">
  <svg viewBox="0 0 120 120">
    <path fill="#43968a" d="M92 42C106 56 106 80 91 91L90 104 77 97C65 99 54 97 46 85H54C59 91 67 92 75 90L85 94V86C97 77 100 62 92 50Z"/>
    <path fill="#fff" stroke="#43968a" stroke-width="6" d="M52 19C34 19 20 32 20 49 20 59 25 68 31 73V84L44 78Q48 79 52 79C71 79 86 66 86 49 86 32 71 19 52 19Z"/>
    <text x="52" y="55" text-anchor="middle">HILFE</text>
  </svg>
</button>
</body>
</html>
```
FILE: styles.css
```css
* { box-sizing: border-box; }
body, h1, h2, h3, p, ul { margin: 0; padding: 0; }
body {
  font-family: Roboto, "Liberation Sans", sans-serif;
  font-size: 32px;
  line-height: 38px;
  color: #212121;
  background: #f4f4f4;
  overflow: hidden;
}
a { color: inherit; text-decoration: none; }
button { font: inherit; color: inherit; border: 0; padding: 0; background: none; cursor: pointer; }
svg { display: block; }
.icon { width: 48px; height: 48px; flex: none; fill: #757575; }
.plain { display: flex; }

.app { display: grid; grid-template-columns: 522px 1fr; height: 100vh; }

/* Sidebar */
.sidebar {
  position: relative;
  display: flex;
  flex-direction: column;
  min-height: 0;
  height: 100vh;
  background: #fff;
  border-right: 2px solid #e0e0e0;
}
.brand { display: flex; align-items: center; gap: 48px; height: 118px; padding: 0 0 26px 17px; flex: none; }
.brand-mark { width: 74px; height: 74px; }
.brand-name { font: 900 48px/60px Inter, sans-serif; letter-spacing: 10px; color: #132a22; -webkit-text-stroke: 2px #132a22; }
.nav-scroll { flex: 1; min-height: 0; display: flex; width: 506px; overflow: hidden; }
.nav { flex: 1; min-width: 0; padding-top: 80px; }
.nav-item { display: flex; align-items: center; height: 112px; padding: 0 36px 0 30px; border-radius: 16px; }
.nav-item .icon { margin-right: 64px; }
.nav-text { overflow: hidden; white-space: nowrap; text-overflow: ellipsis; }
.nav-item.is-active { background: #eee; color: #56bab6; font-weight: 700; }
.nav-item.is-active .icon { fill: #56bab6; }
.nav-item.is-hover { background: #f5f5f5; }
.icon .line { fill: none; stroke: #757575; stroke-width: 1.5; stroke-linejoin: round; stroke-linecap: round; }
.icon .bold { stroke-width: 2; }
.badge { flex: none; margin-left: 17px; padding: 0 12px; border-radius: 20px; background: #f09f4b; color: #fff; font-size: 24px; line-height: 40px; }
.scrollbar { width: 30px; padding: 6px; border: solid #e8e8e8; border-width: 0 2px; background: #fafafa; }
.thumb { width: 16px; height: 66%; border-radius: 8px; background: #c1c1c1; }
.account { display: flex; align-items: center; justify-content: space-between; flex: none; width: 506px; height: 111px; padding: 8px 32px 0 30px; background: #eee; border-radius: 16px 16px 0 0; }
.avatar { display: grid; place-items: center; width: 80px; height: 80px; border-radius: 50%; background: linear-gradient(30deg, #56bab6 20%, #4292c6 95%); }
.avatar .icon { fill: #fff; }
.icon-up { width: 32px; height: 28px; fill: none; stroke: #666; stroke-width: 2; }
.status { position: absolute; left: -2px; bottom: 0; width: 414px; height: 10px; background: #dfe1e5; border: 1px solid #bbb; border-bottom: 0; border-radius: 0 8px 0 0; }

/* Main area */
.main { min-width: 0; height: 100vh; overflow: hidden; padding: 0 10px 0 25px; }
.card { background: #fff; border: 2px solid #e0e0e0; border-radius: 32px; overflow: hidden; }
.topbar { display: flex; justify-content: space-between; height: 118px; border-top: 0; border-radius: 0 0 32px 32px; }
.crumbs { display: flex; gap: 24px; padding: 41px 47px; font-size: 28px; line-height: 34px; }
.crumbs a { color: #56bab6; }
.slash { color: #9e9e9e; }
.rings { width: 592px; height: 116px; }
.columns { display: grid; grid-template-columns: 720fr 1491fr; gap: 50px; margin-top: 32px; }
.column { display: flex; flex-direction: column; gap: 32px; min-width: 0; }

/* Contact */
.contact-name { padding: 103px 31px 25px; height: 176px; background: #56bab6; color: #fff; font-size: 40px; line-height: 48px; font-weight: 500; letter-spacing: .0125em; }
.facts { list-style: none; padding: 32px 31px 0; }
.fact { display: flex; align-items: flex-start; gap: 40px; position: relative; min-height: 48px; }
.tall { min-height: 128px; }
.wide { min-height: 124px; }
.short { min-height: 83px; }
.action { align-items: center; min-height: 72px; margin-bottom: 28px; }
.hint { padding-top: 50px; font-size: 28px; line-height: 34px; color: #757575; }
.value { padding-top: 9px; }
.action .value { padding-top: 0; }
.orange { fill: #f09f4b; }
.green { fill: #43968a; }
.outline-button { display: grid; place-items: center; width: 128px; height: 72px; margin-left: auto; border: 2px solid #212121; border-radius: 8px; }
.outline-button .icon { fill: #212121; }
.pointer { position: absolute; right: 39px; bottom: 77px; width: 50px; height: 232px; }
.contact-actions { display: flex; justify-content: flex-end; padding: 63px 39px 39px; }
.primary-button { display: flex; align-items: center; gap: 19px; height: 56px; padding: 0 24px; border-radius: 8px; background: #56bab6; color: #fff; font-size: 24px; line-height: 56px; font-weight: 500; letter-spacing: .09em; text-transform: uppercase; box-shadow: 0 2px 6px rgba(0, 0, 0, .35); }
.primary-button svg { width: 32px; height: 32px; fill: #fff; }
.interests { padding: 36px 31px; }
.interests h2 { font-size: 28px; line-height: 40px; font-weight: 500; margin-bottom: 24px; }
.chip { display: inline-block; padding: 0 24px; border-radius: 32px; background: #e0e0e0; font-size: 28px; line-height: 64px; }

/* Map */
.map { position: relative; }
.map-canvas { width: 100%; height: auto; }
.terrain path { vector-effect: non-scaling-stroke; stroke-linejoin: round; }
.meadow { fill: #d5e6db; }
.urban { fill: #e8e9ed; }
.park { fill: #b1dab8; }
.runway { fill: #e0e1e5; }
.clinic { fill: #f7e7e5; }
.sand { fill: #fdf5de; }
.water { fill: #a3bff4; }
.stream, .street, .road, .rail, .main-edge, .main-fill, .border, .ferry { fill: none; }
.stream { stroke: #a3bff4; stroke-width: 2; }
.street { stroke: #fff; stroke-width: 2; }
.road { stroke: #fff; stroke-width: 5; }
.rail { stroke: #d4d5d9; stroke-width: 3; }
.main-edge { stroke: #efae3a; stroke-width: 10; }
.main-fill { stroke: #fcedc0; stroke-width: 6; }
.border { stroke: #616468; stroke-width: 2; }
.ferry { stroke: #769ff0; stroke-width: 2; stroke-dasharray: 8 5; }
.map-canvas text { paint-order: stroke; stroke-linejoin: round; }
.place, .city, .district, .street-text { stroke: rgba(255, 255, 255, .85); stroke-width: 5px; }
.place { font-size: 28px; }
.green-text { fill: #3f8548; }
.blue-text { fill: #3871d6; }
.slate-text { fill: #566c7a; }
.dark-text { fill: #202124; }
.city { font-size: 40px; font-weight: 500; fill: #202124; }
.district { font-size: 19px; letter-spacing: 1px; fill: #54585d; }
.district.large { font-size: 24px; letter-spacing: 2px; }
.street-text { font-size: 23px; fill: #54585d; }
.water-text { font-size: 24px; fill: #3560b8; }
.shield { font-size: 18px; font-weight: 500; text-anchor: middle; fill: #212121; }
.map-type { position: absolute; left: 19px; top: 20px; display: flex; gap: 19px; }
.segmented { display: flex; background: #fff; border-radius: 4px; box-shadow: 0 2px 6px rgba(0, 0, 0, .3); font-size: 36px; color: #565656; }
.segmented button { height: 80px; padding: 0 34px; border-left: 1px solid #e6e6e6; }
.segmented .is-on { border: 0; color: #000; font-weight: 500; }
.street-view { padding: 0 14px; background: #fff; border-radius: 6px; box-shadow: 0 2px 6px rgba(0, 0, 0, .3); }
.tool { display: grid; place-items: center; width: 80px; height: 80px; background: #fff; border-radius: 4px; box-shadow: 0 2px 8px rgba(0, 0, 0, .3); }
.tool svg { width: 36px; height: 36px; fill: none; stroke: #666; stroke-width: 4; }
.tool .pegman { width: 34px; height: 60px; stroke: none; }
.fullscreen { position: absolute; right: 20px; top: 20px; }
.tool-stack { position: absolute; right: 20px; bottom: 48px; display: flex; flex-direction: column; gap: 64px; }
.zoom { background: #fff; border-radius: 4px; box-shadow: 0 2px 8px rgba(0, 0, 0, .3); padding: 0 10px; }
.zoom button { display: grid; place-items: center; width: 60px; height: 81px; }
.zoom button + button { border-top: 2px solid #e6e6e6; }
.zoom svg { width: 36px; height: 36px; fill: #666; }
.legend { position: absolute; left: 24px; bottom: 52px; padding: 8px 16px 8px 21px; background: #fff; border-radius: 16px; box-shadow: 0 2px 6px rgba(0, 0, 0, .25); font-size: 29px; }
.legend label { display: flex; align-items: center; height: 76px; }
.legend svg { width: 39px; height: 56px; margin: 0 11px 0 32px; }
.legend input { appearance: none; display: grid; place-items: center; width: 36px; height: 36px; margin: 0; border-radius: 4px; background: #56bab6; }
.legend input:checked::before { content: ""; width: 12px; height: 22px; margin-bottom: 6px; border: solid #fff; border-width: 0 4px 4px 0; transform: rotate(42deg); }
.google { position: absolute; left: 20px; bottom: 4px; font: 700 36px/46px Lato, sans-serif; -webkit-text-stroke: 1px rgba(255, 255, 255, .3); }
.g-blue { color: #4f84ee; }
.g-red { color: #dc4b3e; }
.g-yellow { color: #f2be3f; }
.g-green { color: #4fa75c; }
.credits { position: absolute; right: 0; bottom: 0; display: flex; font-size: 20px; line-height: 28px; color: #000; }
.credits > * { padding: 0 12px 0 11px; background: rgba(245, 245, 245, .75); }
.credits a { margin-left: 2px; }

/* Advice and timeline */
.advice { display: flex; align-items: center; height: 116px; padding: 0 48px 0 47px; font-size: 30px; }
.advice > .icon { fill: #5b92e8; }
.advice p { flex: 1; margin-left: 24px; }
.timeline { background: linear-gradient(#e0e0e0, #e0e0e0) 93px 0 / 4px 100% no-repeat #fff; padding: 32px 96px 0 57px; }
.event { display: flex; align-items: flex-start; min-height: 150px; padding-top: 8px; }
.event-dot { display: grid; place-items: center; width: 76px; height: 76px; margin-top: 8px; border-radius: 50%; background: #5b92e8; box-shadow: 0 3px 5px rgba(0, 0, 0, .25); flex: none; }
.event-dot svg { width: 48px; height: 48px; fill: #fff; }
.event-text { flex: 1; margin-left: 58px; }
.event h3 { font-size: 32px; line-height: 40px; font-weight: 400; color: #000; }
.event p { font-size: 30px; line-height: 44px; color: #9e9e9e; }
.event time { margin: 16px 16px 0 0; font-size: 30px; line-height: 36px; color: #9e9e9e; }
.event time u { text-decoration-thickness: 3px; text-underline-offset: 4px; }
.event .plain { margin-top: 11px; }

/* Floating layers */
.bottom-shade { position: fixed; left: 0; right: 18%; bottom: 0; height: 60px; background: linear-gradient(to top, rgba(0, 0, 0, .07), transparent); -webkit-mask: linear-gradient(to left, transparent, #000 10%); mask: linear-gradient(to left, transparent, #000 10%); pointer-events: none; }
.help { position: fixed; right: 6px; bottom: -12px; width: 120px; height: 120px; border-radius: 50%; background: #fff; }
.help svg { width: 120px; height: 120px; }
.help text { font: 700 18px "Noto Sans", sans-serif; fill: #43968a; }
```
